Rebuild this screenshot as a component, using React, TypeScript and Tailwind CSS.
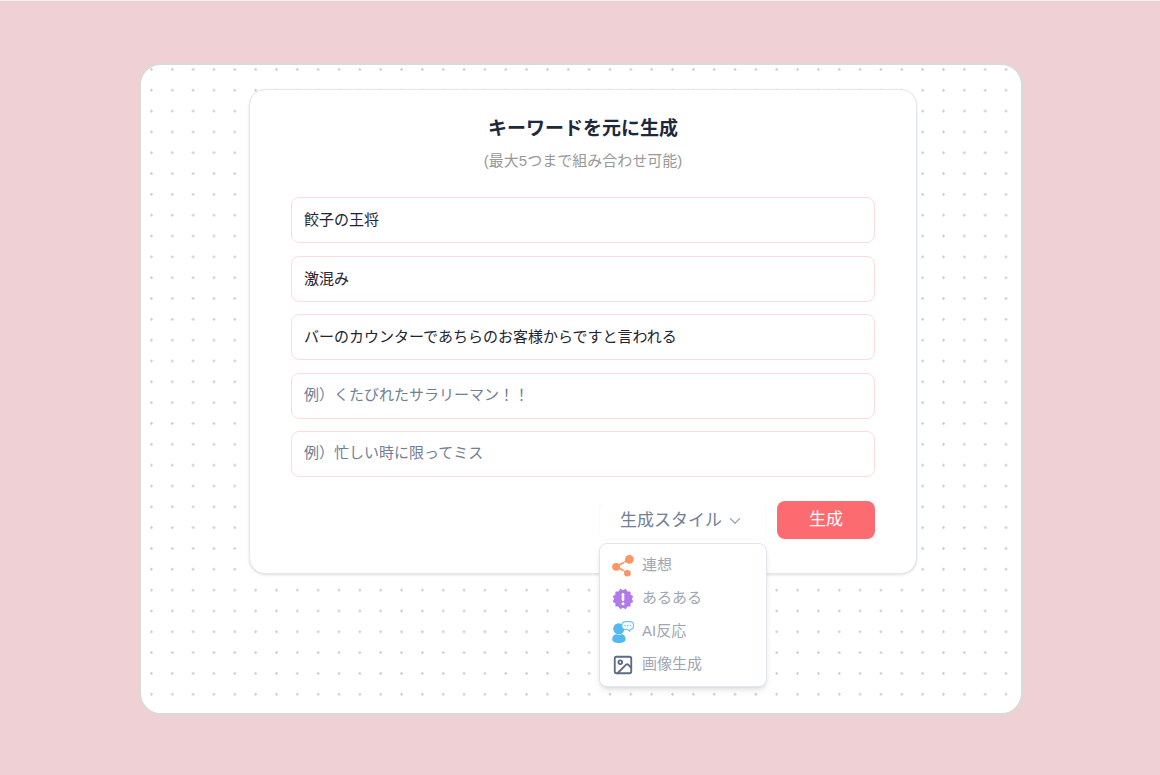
import { useState } from 'react'
import { ChevronDown, Image as ImageIcon } from 'lucide-react'

const EJEMPLOS = ['例）餃子の王将', '例）激混み', '例）バーのカウンター', '例）くたびれたサラリーマン！！', '例）忙しい時に限ってミス']

function ShareIcon() {
  return (
    <svg viewBox="0 0 22 22" className="size-[22px]" aria-hidden="true">
      <path d="M4.3 11.500 17.300 4.600" stroke="#fb9466" strokeWidth="1.8" strokeDasharray="8.600 .7" />
      <path d="M4.300 11.500 15.400 18" stroke="#fb9466" strokeWidth="1.8" strokeDasharray="8.600 .7" />
      <circle cx="4.1" cy="11.800" r="3.9" fill="#fb9466" />
      <circle cx="17.400" cy="4.400" r="4.3" fill="#fb9466" />
      <circle cx="15.400" cy="18.200" r="3.3" fill="#fb9466" />
    </svg>
  )
}

function BadgeIcon() {
  return (
    <svg viewBox="0 0 22 22" className="size-[22px]" aria-hidden="true">
      <g fill="#b07aea" stroke="#b07aea" strokeWidth="1.2" strokeLinejoin="round">
        <rect x="4" y="4" width="14" height="14" />
        <rect x="4" y="4" width="14" height="14" transform="rotate(30 11 11)" />
        <rect x="4" y="4" width="14" height="14" transform="rotate(60 11 11)" />
      </g>
      <path d="M11 6.2v5.6" stroke="#fff" strokeWidth="2.6" strokeLinecap="round" />
      <circle cx="11" cy="15.7" r="1.5" fill="#fff" />
    </svg>
  )
}

function PersonIcon() {
  return (
    <svg viewBox="0 0 22 22" className="size-[22px]" aria-hidden="true">
      <circle cx="6.8" cy="7.8" r="5.6" fill="#55b9ef" />
      <path d="M.2 18.2c0-3 2-4.9 4.400-4.900 1.500.8 3.100.8 4.600 0 2.500 0 4.400 1.900 4.400 4.900 0 2.600-2.700 3.700-6.700 3.700S.2 20.800.2 18.200Z" fill="#55b9ef" />
      <path
        d="M13.200.7h5a3.300 3.300 0 0 1 3.300 3.300v1.200a3.300 3.300 0 0 1-3.300 3.300l-.5 1.700-2.200-1.700h-2.300A3.300 3.300 0 0 1 9.900 5.200V4A3.300 3.300 0 0 1 13.200.7Z"
        fill="#fff"
        stroke="#6cc3f2"
        strokeWidth="1.2"
      />
      <path d="M12.300 4.400h1.500M15 4.400h1.500M17.700 4.400h1.500" stroke="#7cc9f3" strokeWidth="1.5" />
    </svg>
  )
}

const ESTILOS = [
  { label: '連想', icon: <ShareIcon /> },
  { label: 'あるある', icon: <BadgeIcon /> },
  { label: 'AI反応', icon: <PersonIcon /> },
  { label: '画像生成', icon: <ImageIcon className="size-[22px] text-[#5b6b86]" strokeWidth={2} /> },
]

function StyleMenu() {
  const [open, setOpen] = useState(true)

  return (
    <div className="relative w-[168px]">
      <button
        type="button"
        aria-expanded={open}
        onClick={() => setOpen(!open)}
        className="flex h-[39px] w-full items-center gap-1 rounded-lg border border-t-transparent border-[#fafafb] pl-5 text-[17px] text-[#718096]"
      >
        生成スタイル
        <ChevronDown className="size-[18px] text-[#a0a9b8]" strokeWidth={1.8} />
      </button>
      {open && (
        <ul className="absolute top-[42px] left-0 w-full rounded-lg border border-[#dfe6f0] bg-white py-[5px] shadow-md">
          {ESTILOS.map(({ label, icon }) => (
            <li key={label}>
              <button
                type="button"
                onClick={() => setOpen(false)}
                className="flex h-[33px] w-full items-center gap-2 px-3 text-[15px] text-[#a0a6b1] hover:bg-gray-50"
              >
                {icon}
                {label}
              </button>
            </li>
          ))}
        </ul>
      )}
    </div>
  )
}

export default function App() {
  const [keywords, setKeywords] = useState(['餃子の王将', '激混み', 'バーのカウンターであちらのお客様からですと言われる', '', ''])

  return (
    <div className="min-h-screen border-t border-[#f7f0f1] bg-[#efd1d5] pt-[62px] pb-[60px] pl-[2px] font-['Liberation_Sans','Noto_Sans_CJK_JP',sans-serif]">
      <main className="mx-auto w-full max-w-[884px] rounded-[22px] border-2 border-[#d9dada] bg-white bg-[radial-gradient(circle,#cfcfcf_1px,transparent_1.5px)] bg-size-[2.37%_3.215%] bg-position-[0_-6px] pt-6 pr-4 pb-[139px] pl-5">
        <form
          onSubmit={e => e.preventDefault()}
          className="mx-auto w-full max-w-[668px] rounded-2xl border border-[#e1e8f0] bg-white px-[41px] pt-[25px] pb-[33px] shadow-sm"
        >
          <h1 className="text-center text-[19px] leading-7 font-bold text-[#1e293b]">キーワードを元に生成</h1>
          <p className="mt-1.5 text-center text-[15px] leading-6 text-[#999]">(最大5つまで組み合わせ可能)</p>

          <div className="mt-6 flex h-[280px] flex-col justify-between">
            {keywords.map((keyword, i) => (
              <input
                key={i}
                type="text"
                aria-label={`キーワード${i + 1}`}
                placeholder={EJEMPLOS[i]}
                value={keyword}
                onChange={e => setKeywords(keywords.map((k, j) => (j === i ? e.target.value : k)))}
                className="h-[46px] w-full rounded-lg border border-[#fedcdd] bg-white px-3 pb-[3px] text-[15px] text-[#1e2433] placeholder:text-[#718096] focus:border-red-300 focus:outline-none"
              />
            ))}
          </div>

          <div className="mt-6 flex items-start justify-end gap-2.5">
            <StyleMenu />
            <button type="submit" className="h-[38px] w-[98px] rounded-lg bg-[#fb6b70] text-[17px] text-white hover:bg-[#f95d63]">
              生成
            </button>
          </div>
        </form>
      </main>
    </div>
  )
}
